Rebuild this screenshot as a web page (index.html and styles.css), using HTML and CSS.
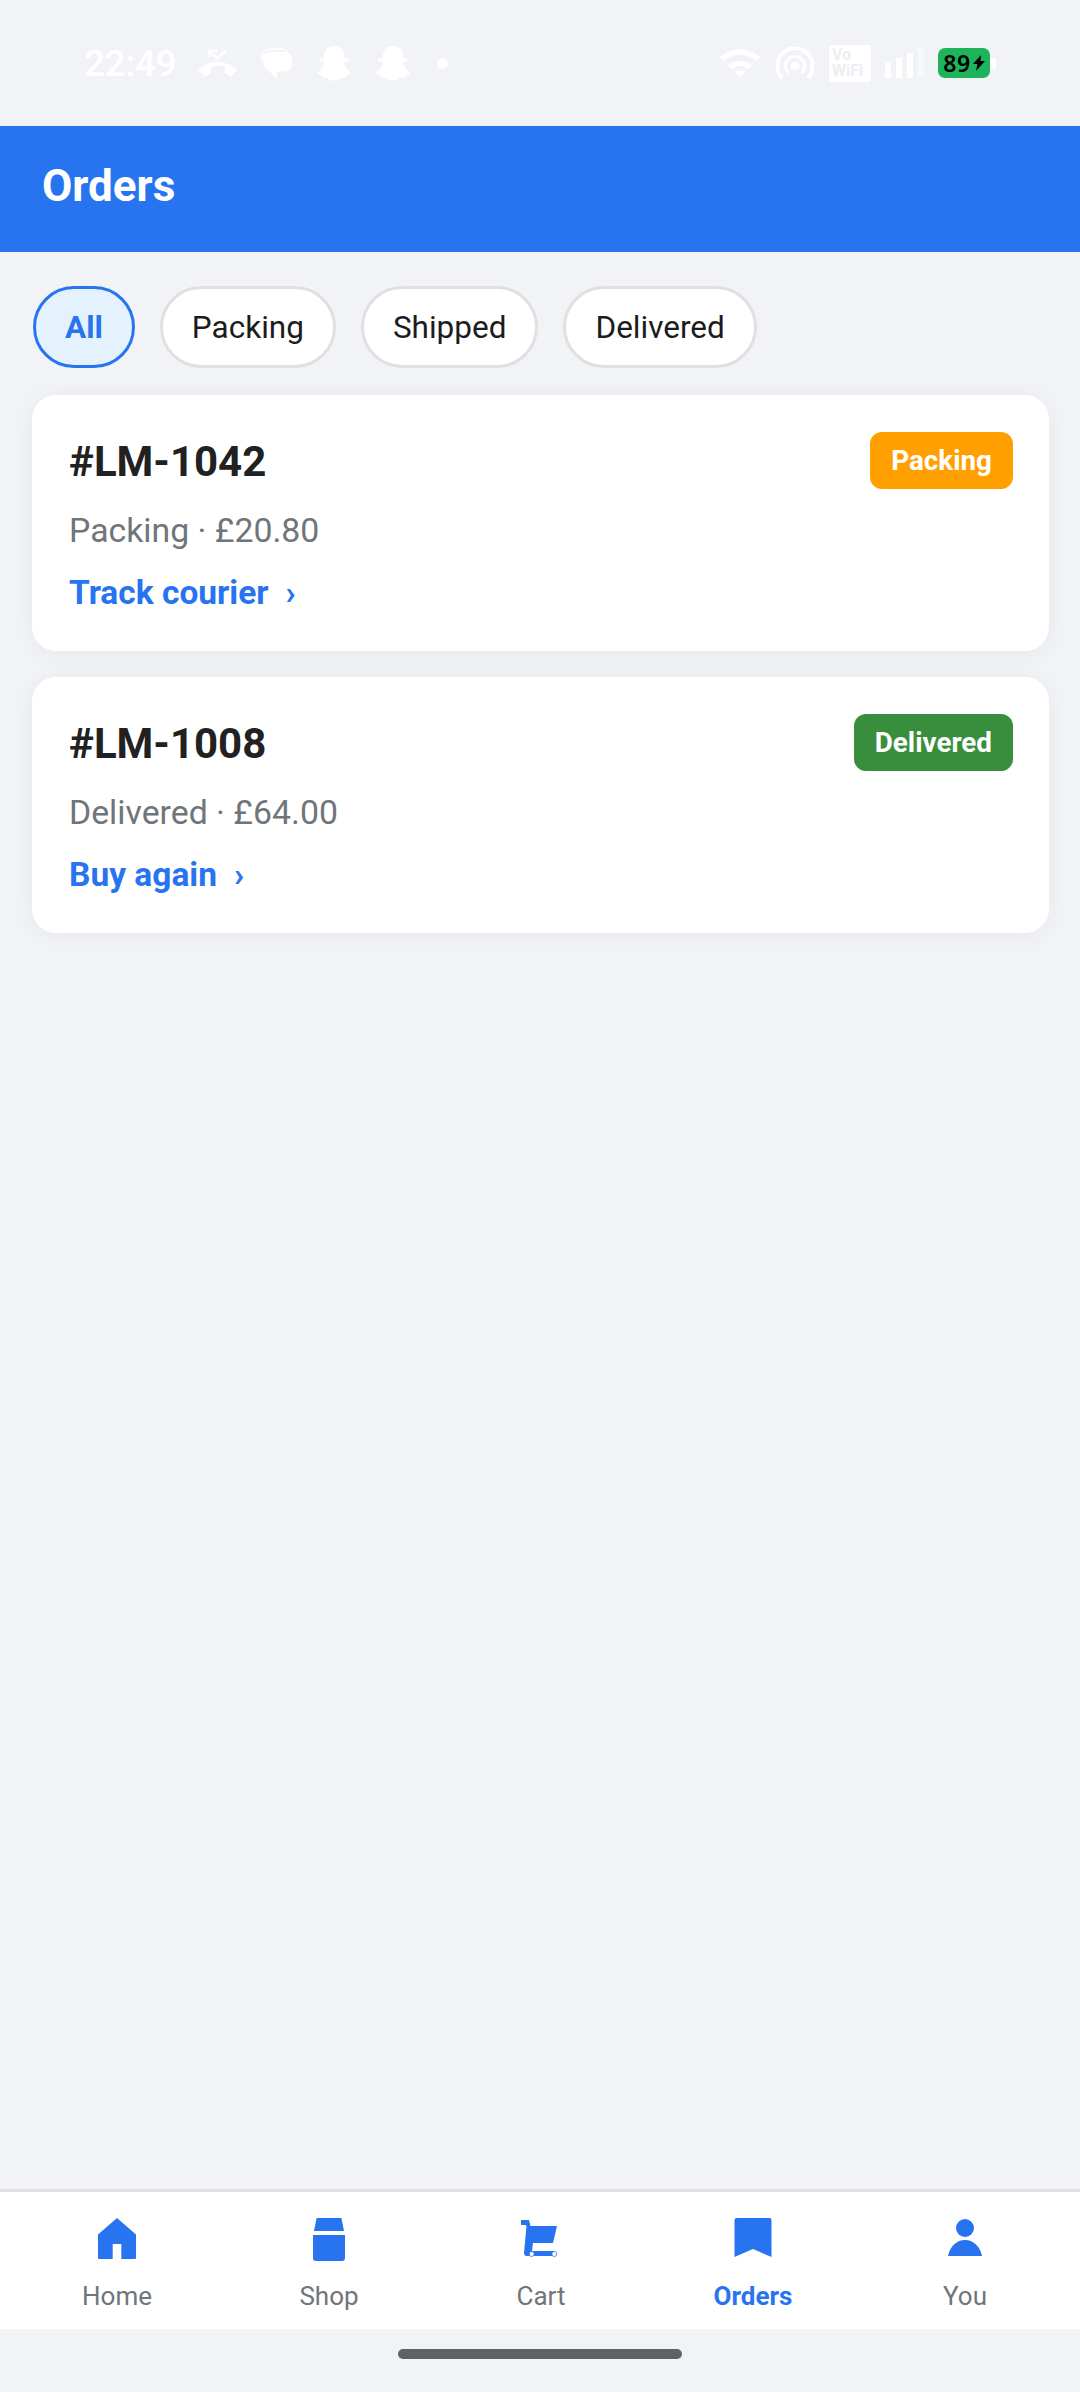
FILE: index.html
```html
<!DOCTYPE html>
<html lang="en">
<head>
    <meta charset="UTF-8">
    <meta name="viewport" content="width=device-width, initial-scale=1.0">
    <title>Orders</title>
    <link rel="stylesheet" href="styles.css">
</head>
<body>
    <div class="app">
        <!-- Status bar -->
        <div class="status-bar">
            <div class="status-left">
                <span class="status-time">22:49</span>
                <svg class="status-icon call-icon" viewBox="0 0 39 28"><path d="M0 21C6 15 13 13 19.500 13S33 15 39 21L33 28 27 24V18C22 16 17 16 13 18V24L7 28z"/><path class="call-arrow" d="M11 8V2h8M11 2l8.500 7.500L28 1"/></svg>
                <svg class="status-icon bubble-icon" viewBox="0 0 31 31"><path d="M9 4h15c4 0 7 3 7 7v5c0 4-3 7.500-7 7.500h-8V31L5 20c-2-2-3-4-3-7v-2c0-4 3-7 7-7z"/><path class="bubble-back" d="M.8 13V9C.8 4 4 1 8 1h12c3 0 5 1 6 3"/></svg>
                <svg class="status-icon snap-icon" viewBox="0 0 36 35"><path d="M18 0c6 0 10 4 10 9v4l4-1 1.500 2-5.500 3c1 4 3.500 7.500 7.500 10l-5 3-1 1.500-5 .5-3 2.500h-7l-3-2.500-5-.5-1-1.500-5-3c4-2.500 6.500-6 7.500-10l-5.500-3 1.500-2 4 1V9c0-5 4-9 10-9z"/></svg>
                <svg class="status-icon snap-icon snap-last" viewBox="0 0 36 35"><path d="M18 0c6 0 10 4 10 9v4l4-1 1.500 2-5.500 3c1 4 3.500 7.500 7.500 10l-5 3-1 1.500-5 .5-3 2.500h-7l-3-2.500-5-.5-1-1.500-5-3c4-2.500 6.500-6 7.500-10l-5.500-3 1.500-2 4 1V9c0-5 4-9 10-9z"/></svg>
                <span class="status-dot"></span>
            </div>
            <div class="status-right">
                <svg class="status-icon wifi-icon" viewBox="0 0 40 28"><path d="M0 8c12-10.500 28-10.500 40 0l-3.500 4C26 3.500 14 3.500 3.500 12z"/><path d="M8 16c7-5.500 17-5.500 24 0l-3.500 4c-5.500-4-11.500-4-17 0z"/><path d="M14.500 23c3.500-2 7.500-2 11 0L20 28z"/></svg>
                <svg class="status-icon hotspot-icon" viewBox="0 0 38 32"><path class="ring ring-outer" d="M6 31A17.700 17.700 0 1 1 32 31"/><path class="ring ring-inner" d="M12.500 26A9.500 9.500 0 1 1 25.500 26"/><circle cx="19" cy="19" r="4.500"/></svg>
                <div class="vowifi">Vo<br>WiFi</div>
                <div class="signal">
                    <span class="bar bar-1"></span>
                    <span class="bar bar-2"></span>
                    <span class="bar bar-3"></span>
                    <span class="bar bar-4"></span>
                </div>
                <div class="battery">
                    <div class="battery-body">89<svg class="bolt" viewBox="0 0 12 16"><path d="M8 0 0 9h4.500L3 16l9-10H7.500z"/></svg></div>
                    <span class="battery-cap"></span>
                </div>
            </div>
        </div>

        <header class="app-header">
            <h1>Orders</h1>
        </header>

        <!-- Filter chips -->
        <div class="chips">
            <button class="chip chip-active">All</button>
            <button class="chip">Packing</button>
            <button class="chip">Shipped</button>
            <button class="chip">Delivered</button>
        </div>

        <!-- Orders -->
        <main class="orders">
            <div class="order-card">
                <div class="order-top">
                    <span class="order-id">#LM-1042</span>
                    <span class="badge badge-packing">Packing</span>
                </div>
                <div class="order-meta">Packing · £20.80</div>
                <a class="order-link" href="#">Track courier<span class="chevron">›</span></a>
            </div>
            <div class="order-card">
                <div class="order-top">
                    <span class="order-id">#LM-1008</span>
                    <span class="badge badge-delivered">Delivered</span>
                </div>
                <div class="order-meta">Delivered · £64.00</div>
                <a class="order-link" href="#">Buy again<span class="chevron">›</span></a>
            </div>
        </main>

        <!-- Bottom navigation -->
        <nav class="bottom-nav">
            <a class="nav-item" href="#">
                <svg class="nav-icon" viewBox="0 0 48 48"><path d="M24 2 43 18.500V42a1 1 0 0 1-1 1H28.300V28h-8.600V43H6a1 1 0 0 1-1-1V18.500z"/></svg>
                <span>Home</span>
            </a>
            <a class="nav-item" href="#">
                <svg class="nav-icon" viewBox="0 0 48 48"><path d="M11.600 2H36.400L39 15H9z"/><path d="M8 19H40V42a3 3 0 0 1-3 3H11a3 3 0 0 1-3-3z"/></svg>
                <span>Shop</span>
            </a>
            <a class="nav-item" href="#">
                <svg class="nav-icon" viewBox="0 0 48 48"><path d="M4 4h8l1.500 6H40l-4 17H16l-1 8h22v5H10a3 3 0 0 1-3-3l2.500-27-1-1H4z"/><circle class="wheel" cx="14.700" cy="38" r="2.500"/><circle class="wheel" cx="37.300" cy="38" r="2.500"/></svg>
                <span>Cart</span>
            </a>
            <a class="nav-item nav-item-active" href="#">
                <svg class="nav-icon" viewBox="0 0 48 48"><path d="M5.500 4a2 2 0 0 1 2-2h33a2 2 0 0 1 2 2V41L24 33 5.500 41z"/></svg>
                <span>Orders</span>
            </a>
            <a class="nav-item" href="#">
                <svg class="nav-icon" viewBox="0 0 48 48"><circle cx="24" cy="12" r="9"/><path d="M7 40c2-10 9-16 17-16s15 6 17 16z"/></svg>
                <span>You</span>
            </a>
        </nav>

        <div class="gesture-area">
            <span class="gesture-bar"></span>
        </div>
    </div>
</body>
</html>
```

FILE: styles.css
```css
* {
    box-sizing: border-box;
}

body {
    margin: 0;
    background-color: #f1f3f7;
    font-family: Roboto, "Noto Sans", sans-serif;
}

.app {
    width: 1080px;
    height: 2392px;
    display: flex;
    flex-direction: column;
}

/* Status bar */
.status-bar {
    height: 126px;
    padding: 0 84px 0 84px;
    display: flex;
    justify-content: space-between;
    align-items: center;
    color: white;
    fill: white;
}

.status-left,
.status-right {
    display: flex;
    align-items: center;
}

.status-time {
    font-size: 36.5px;
    font-weight: 500;
    margin-right: 21px;
}

.status-icon {
    display: block;
}

.call-icon {
    width: 39px;
    height: 28px;
    margin-right: 24px;
}

.call-arrow,
.bubble-back,
.ring {
    fill: none;
    stroke: white;
}

.call-arrow {
    stroke-width: 2.5;
}

.bubble-back {
    stroke-width: 1.5;
}

.bubble-icon {
    width: 31px;
    height: 31px;
    margin-right: 24px;
}

.snap-icon {
    width: 36px;
    height: 35px;
    margin-right: 23px;
}

.snap-last {
    margin-right: 26px;
}

.status-dot {
    width: 11px;
    height: 11px;
    border-radius: 50%;
    background-color: white;
}

.wifi-icon {
    width: 40px;
    height: 28px;
    margin-right: 16px;
}

.hotspot-icon {
    width: 38px;
    height: 32px;
    margin-right: 15px;
}

.ring-outer {
    stroke-width: 4;
}

.ring-inner {
    stroke-width: 3;
}

.vowifi {
    width: 42px;
    height: 37px;
    margin-right: 14px;
    padding: 2px 0 0 3px;
    border-radius: 3px;
    background-color: white;
    color: #eceef2;
    font-size: 16px;
    font-weight: 700;
    line-height: 16px;
}

.signal {
    display: flex;
    align-items: flex-end;
    gap: 5px;
    height: 30px;
    margin-right: 14px;
}

.bar {
    width: 6px;
    background-color: white;
}

.bar-1 { height: 15px; }
.bar-2 { height: 20px; }
.bar-3 { height: 25px; }
.bar-4 { height: 30px; opacity: 0.4; }

.battery {
    display: flex;
    align-items: center;
}

.battery-body {
    width: 52px;
    height: 30px;
    border-radius: 7px;
    background-color: #1fb35b;
    color: black;
    fill: black;
    font-family: "Noto Sans", sans-serif;
    font-size: 23px;
    font-weight: 600;
    letter-spacing: 0.5px;
    display: flex;
    align-items: center;
    justify-content: center;
    gap: 2px;
}

.bolt {
    width: 12px;
    height: 16px;
}

.battery-cap {
    width: 6px;
    height: 11px;
    border-radius: 0 3px 3px 0;
    background-color: white;
}

/* Header */
.app-header {
    height: 126px;
    padding: 0 42px 6px;
    display: flex;
    align-items: center;
    background-color: #2874f0;
}

.app-header h1 {
    margin: 0;
    color: white;
    font-size: 44px;
    font-weight: 700;
}

/* Chips */
.chips {
    display: flex;
    gap: 25px;
    padding: 34px 33px 0;
}

.chip {
    height: 82px;
    padding: 0 29px;
    border: 3px solid #e0e0e0;
    border-radius: 41px;
    background-color: white;
    color: #1c1c1c;
    font-family: Roboto, sans-serif;
    font-size: 31.5px;
}

.chip-active {
    border-color: #2874f0;
    background-color: #e3f2fd;
    color: #2874f0;
    font-weight: 700;
}

/* Order cards */
.orders {
    flex: 1;
    padding: 27px 31px 0 32px;
    display: flex;
    flex-direction: column;
    gap: 26px;
}

.order-card {
    height: 256px;
    padding: 37px 36px 0 37px;
    border-radius: 24px;
    background-color: white;
    box-shadow: 0 2px 24px rgba(0, 0, 0, 0.05);
}

.order-top {
    display: flex;
    justify-content: space-between;
    align-items: flex-start;
}

.order-id {
    margin-top: 6px;
    color: #212121;
    font-size: 42px;
    font-weight: 700;
    line-height: 48px;
}

.badge {
    height: 57px;
    padding: 0 21px;
    border-radius: 12px;
    color: white;
    font-size: 27.8px;
    font-weight: 700;
    line-height: 57px;
}

.badge-packing {
    background-color: #ffa000;
}

.badge-delivered {
    background-color: #388e3c;
}

.order-meta {
    margin-top: 22px;
    color: #70757a;
    font-size: 33.8px;
    line-height: 40px;
}

.order-link {
    display: block;
    margin-top: 22px;
    color: #2874f0;
    font-size: 33.5px;
    font-weight: 700;
    line-height: 40px;
    text-decoration: none;
}

.chevron {
    margin-left: 17px;
}

/* Bottom navigation */
.bottom-nav {
    height: 140px;
    padding: 24px 9px 0 11px;
    display: flex;
    border-top: 3px solid #e0e0e0;
    background-color: white;
}

.nav-item {
    flex: 1;
    display: flex;
    flex-direction: column;
    align-items: center;
    color: #70757a;
    font-size: 26px;
    line-height: 30px;
    text-decoration: none;
}

.nav-icon {
    width: 48px;
    height: 48px;
    margin-bottom: 17px;
    fill: #2874f0;
}

.wheel {
    fill: white;
    stroke: #2874f0;
    stroke-width: 0.8;
}

.nav-item-active {
    color: #2874f0;
    font-weight: 700;
}

/* Gesture bar */
.gesture-area {
    height: 63px;
    padding-top: 20px;
    display: flex;
    justify-content: center;
    align-items: flex-start;
}

.gesture-bar {
    width: 284px;
    height: 10px;
    border-radius: 5px;
    background-color: #606164;
}
```
